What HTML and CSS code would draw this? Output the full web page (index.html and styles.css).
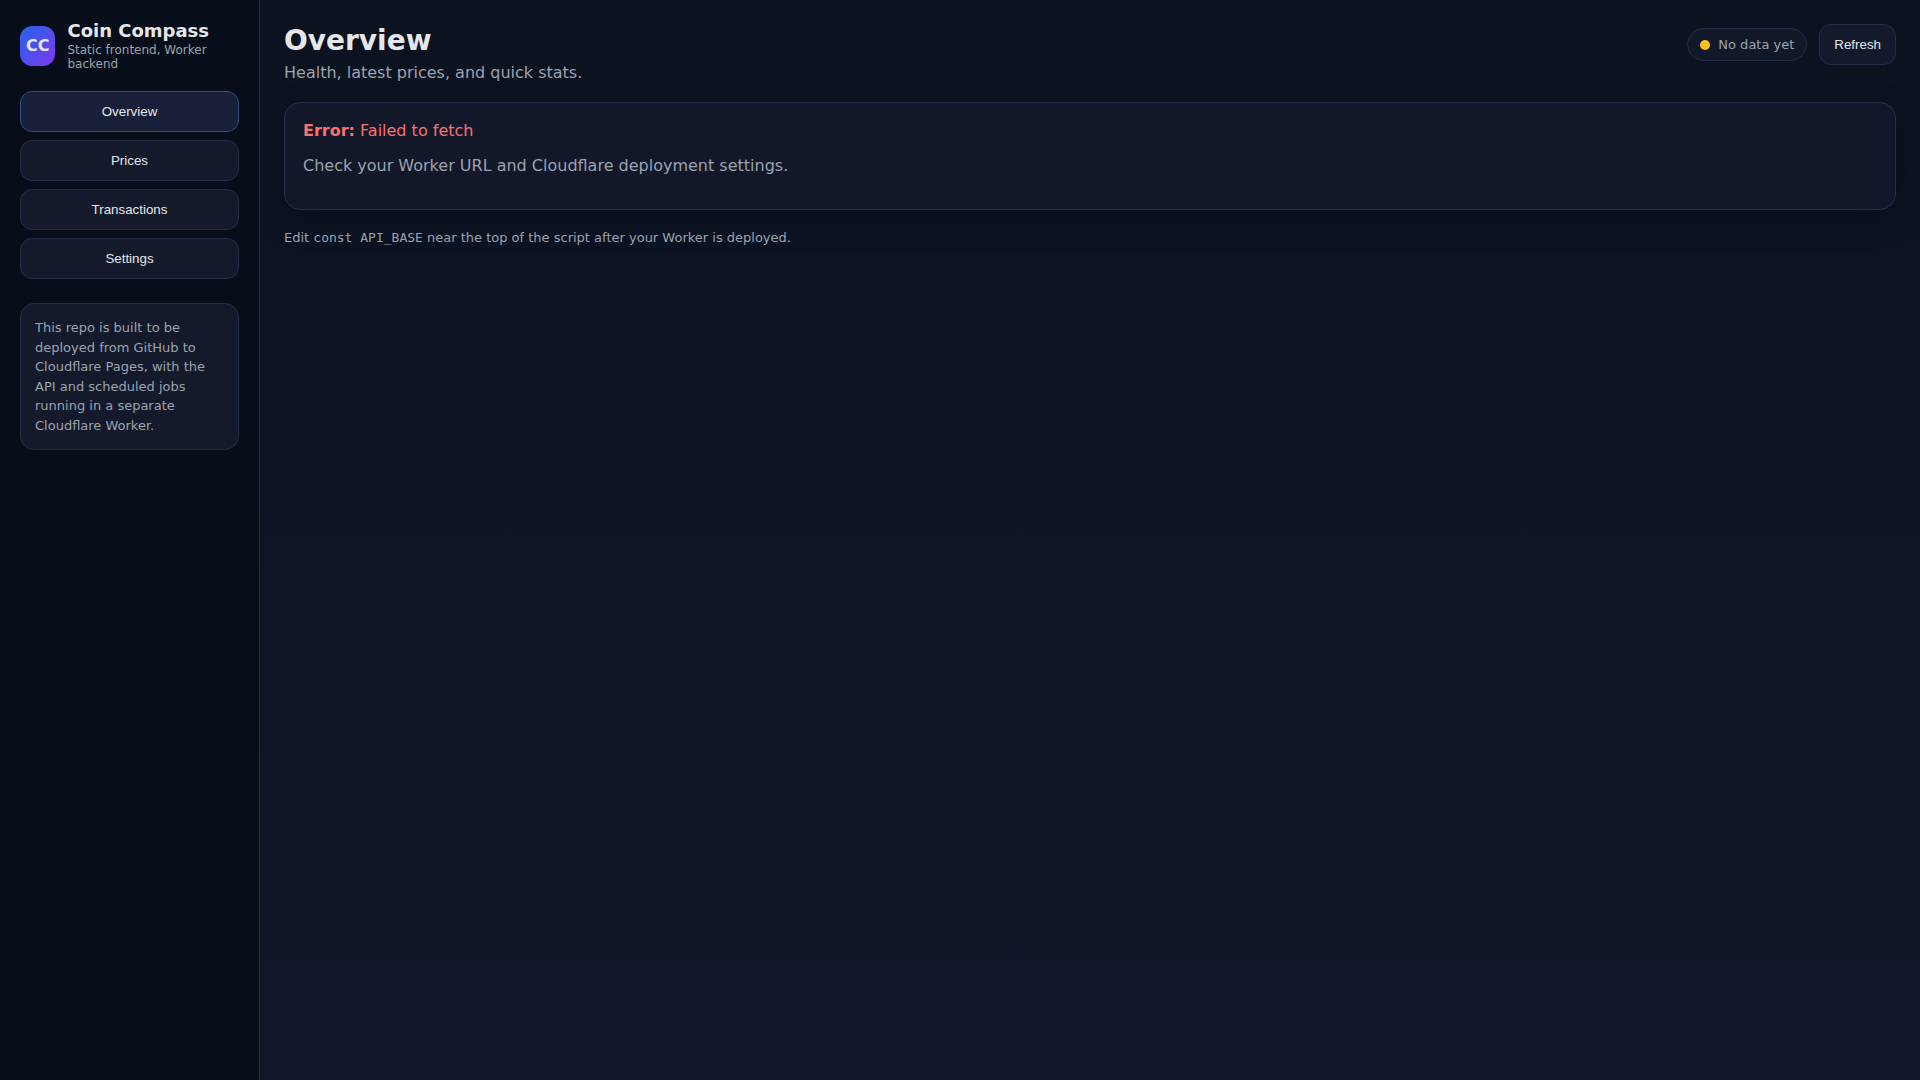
FILE: index.html
```html
<!DOCTYPE html>
<html lang="en">
<head>
<meta charset="utf-8">
<meta name="viewport" content="width=device-width, initial-scale=1">
<title>Coin Compass</title>
<link rel="stylesheet" href="styles.css">
</head>
<body>
<div class="app">
  <aside class="sidebar">
    <div class="brand">
      <div class="logo">CC</div>
      <div>
        <div class="brand-title">Coin Compass</div>
        <div class="brand-sub">Static frontend, Worker backend</div>
      </div>
    </div>
    <nav class="nav">
      <button class="btn active" type="button">Overview</button>
      <button class="btn" type="button">Prices</button>
      <button class="btn" type="button">Transactions</button>
      <button class="btn" type="button">Settings</button>
    </nav>
    <div class="note">This repo is built to be deployed from GitHub to Cloudflare Pages, with the API and scheduled jobs running in a separate Cloudflare Worker.</div>
  </aside>
  <main class="main">
    <header class="topbar">
      <div>
        <h1 class="title">Overview</h1>
        <div class="subtitle">Health, latest prices, and quick stats.</div>
      </div>
      <div class="actions">
        <div class="pill"><span class="dot"></span><span>No data yet</span></div>
        <button class="btn" type="button">Refresh</button>
      </div>
    </header>
    <section class="card">
      <div class="error"><strong>Error:</strong> Failed to fetch</div>
      <p class="hint">Check your Worker URL and Cloudflare deployment settings.</p>
    </section>
    <p class="footer">Edit <code>const API_BASE</code> near the top of the script after your Worker is deployed.</p>
  </main>
</div>
</body>
</html>
```
FILE: styles.css
```css
:root {
  --text: #e5e7eb;
  --muted: #9ca3af;
  --line: #232f48;
  --surface: #141a2b;
}

* {
  box-sizing: border-box;
}

body {
  margin: 0;
  color: var(--text);
  background: linear-gradient(180deg, #0b1220, #0f172a);
  font-family: "DejaVu Sans", sans-serif;
  font-size: 16px;
}

.app {
  display: grid;
  grid-template-columns: 260px 1fr;
  min-height: 100vh;
}

.sidebar {
  padding: 20px;
  background: #070d19;
  border-right: 1px solid #232e42;
}

.brand {
  display: flex;
  align-items: center;
  gap: 12px;
  margin-bottom: 20px;
}

.logo {
  display: grid;
  place-items: center;
  width: 40px;
  height: 40px;
  border-radius: 12px;
  background: linear-gradient(135deg, #2563eb, #7c3aed);
  font-weight: 700;
}

.brand-title {
  margin-bottom: 2px;
  font-size: 18px;
  line-height: 21px;
  font-weight: 700;
}

.brand-sub {
  color: var(--muted);
  font-size: 12px;
  line-height: 14px;
}

.nav {
  display: grid;
  gap: 8px;
}

.btn {
  padding: 12px 14px;
  border: 1px solid var(--line);
  border-radius: 12px;
  background: var(--surface);
  color: var(--text);
  font-family: "Liberation Sans", Arial, sans-serif;
  cursor: pointer;
}

.btn.active {
  background: #181f38;
  border-color: #2f4d7d;
}

.note {
  margin-top: 24px;
  padding: 14px;
  border: 1px solid var(--line);
  border-radius: 14px;
  background: var(--surface);
  color: var(--muted);
  font-size: 13px;
  line-height: 1.5;
}

.main {
  padding: 24px;
}

.topbar {
  display: flex;
  justify-content: space-between;
  align-items: flex-start;
  gap: 16px;
  margin-bottom: 20px;
}

.title {
  margin: 0 0 6px;
  font-size: 28px;
  line-height: 33px;
}

.subtitle,
.hint {
  color: var(--muted);
}

.actions {
  display: flex;
  align-items: center;
  gap: 12px;
}

.pill {
  display: flex;
  align-items: center;
  gap: 8px;
  padding: 8px 12px;
  border: 1px solid var(--line);
  border-radius: 999px;
  background: #111827;
  color: var(--muted);
  font-size: 13px;
}

.dot {
  width: 10px;
  height: 10px;
  border-radius: 50%;
  background: #fbbf24;
}

.card {
  padding: 18px;
  border: 1px solid var(--line);
  border-radius: 16px;
  background: #12182a;
  box-shadow: 0 10px 30px rgba(0, 0, 0, 0.25);
}

.error {
  color: #f87171;
}

.hint {
  margin: 16px 0;
}

.footer {
  margin: 20px 0 0;
  color: var(--muted);
  font-size: 13px;
}

.footer code {
  font-family: "DejaVu Sans Mono", monospace;
  font-size: 13px;
}
```
